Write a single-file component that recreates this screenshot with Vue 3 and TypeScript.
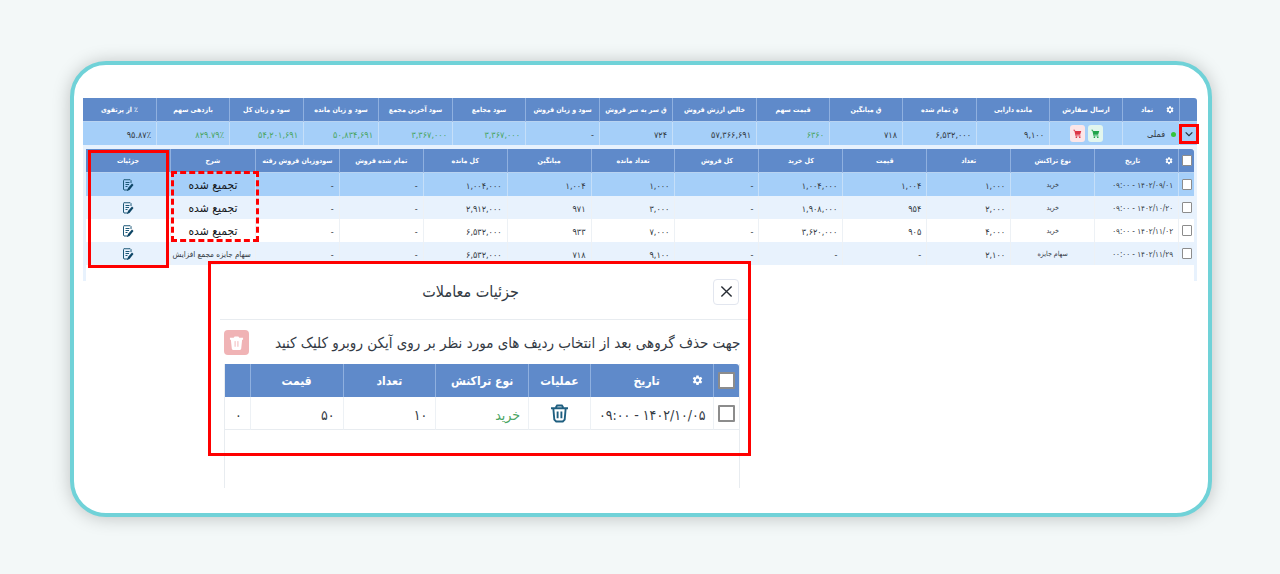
<script setup lang="ts">
interface Column {
  label: string
  width: number
  gear?: boolean
}

interface Trade {
  date: string
  kind: string
  values: string[]
  note: string
  merged: boolean
}

const share = (columns: Column[], index: number): string => {
  const total = columns.reduce((sum, column) => sum + column.width, 0)
  return `${(columns[index].width / total) * 100}%`
}

const portfolioColumns: Column[] = [
  { label: '', width: 18 },
  { label: 'نماد', width: 57, gear: true },
  { label: 'ارسال سفارش', width: 73 },
  { label: 'مانده دارایی', width: 73 },
  { label: 'ق تمام شده', width: 74 },
  { label: 'ق میانگین', width: 73 },
  { label: 'قیمت سهم', width: 73 },
  { label: 'خالص ارزش فروش', width: 84 },
  { label: 'ق سر به سر فروش', width: 73 },
  { label: 'سود و زیان فروش', width: 74 },
  { label: 'سود مجامع', width: 73 },
  { label: 'سود آخرین مجمع', width: 74 },
  { label: 'سود و زیان مانده', width: 75 },
  { label: 'سود و زیان کل', width: 74 },
  { label: 'بازدهی سهم', width: 73 },
  { label: '٪ از پرتفوی', width: 73 },
]

const portfolioValues = [
  { text: '۹,۱۰۰', gain: false },
  { text: '۶,۵۳۲,۰۰۰', gain: false },
  { text: '۷۱۸', gain: false },
  { text: '۶۳۶۰', gain: true },
  { text: '۵۷,۳۶۶,۶۹۱', gain: false },
  { text: '۷۲۴', gain: false },
  { text: '-', gain: false },
  { text: '۳,۳۶۷,۰۰۰', gain: true },
  { text: '۳,۳۶۷,۰۰۰', gain: true },
  { text: '۵۰,۸۳۴,۶۹۱', gain: true },
  { text: '۵۴,۲۰۱,۶۹۱', gain: true },
  { text: '۸۲۹.۷۹٪', gain: true },
  { text: '۹۵.۸۷٪', gain: false },
]

const tradeColumns: Column[] = [
  { label: '', width: 16 },
  { label: 'تاریخ', width: 84, gear: true },
  { label: 'نوع تراکنش', width: 84 },
  { label: 'تعداد', width: 84 },
  { label: 'قیمت', width: 84 },
  { label: 'کل خرید', width: 84 },
  { label: 'کل فروش', width: 84 },
  { label: 'تعداد مانده', width: 84 },
  { label: 'میانگین', width: 84 },
  { label: 'کل مانده', width: 84 },
  { label: 'تمام شده فروش', width: 84 },
  { label: 'سودوزیان فروش رفته', width: 84 },
  { label: 'شرح', width: 85 },
  { label: 'جزئیات', width: 84 },
]

const trades: Trade[] = [
  {
    date: '۱۴۰۲/۰۹/۰۱ - ۰۹:۰۰',
    kind: 'خرید',
    values: ['۱,۰۰۰', '۱,۰۰۴', '۱,۰۰۴,۰۰۰', '-', '۱,۰۰۰', '۱,۰۰۴', '۱,۰۰۴,۰۰۰', '-', '-'],
    note: 'تجمیع شده',
    merged: true,
  },
  {
    date: '۱۴۰۲/۱۰/۲۰ - ۰۹:۰۰',
    kind: 'خرید',
    values: ['۲,۰۰۰', '۹۵۴', '۱,۹۰۸,۰۰۰', '-', '۳,۰۰۰', '۹۷۱', '۲,۹۱۲,۰۰۰', '-', '-'],
    note: 'تجمیع شده',
    merged: true,
  },
  {
    date: '۱۴۰۲/۱۱/۰۲ - ۰۹:۰۰',
    kind: 'خرید',
    values: ['۴,۰۰۰', '۹۰۵', '۳,۶۲۰,۰۰۰', '-', '۷,۰۰۰', '۹۳۳', '۶,۵۳۲,۰۰۰', '-', '-'],
    note: 'تجمیع شده',
    merged: true,
  },
  {
    date: '۱۴۰۲/۱۱/۲۹ - ۰۰:۰۰',
    kind: 'سهام جایزه',
    values: ['۲,۱۰۰', '-', '-', '-', '۹,۱۰۰', '۷۱۸', '۶,۵۳۲,۰۰۰', '-', '-'],
    note: 'سهام جایزه مجمع افزایش',
    merged: false,
  },
]

const detailColumns: Column[] = [
  { label: '', width: 26 },
  { label: 'تاریخ', width: 124, gear: true },
  { label: 'عملیات', width: 62 },
  { label: 'نوع تراکنش', width: 93 },
  { label: 'تعداد', width: 93 },
  { label: 'قیمت', width: 93 },
  { label: '', width: 25 },
]

const gearPath =
  'M9.500 1h5l.6 3.300 1.500.9 3.200-1.200 2.500 4.300-2.600 2.200v1.800l2.600 2.200-2.500 4.300-3.200-1.200-1.500.9-.6 3.300h-5l-.6-3.300-1.500-.9-3.200 1.200-2.500-4.300 2.600-2.200v-1.800L1.700 8.300 4.200 4l3.200 1.200 1.500-.9zM12 7.600a3.800 3.800 0 1 0 0 7.600 3.800 3.800 0 0 0 0-7.600z'
const cartPath =
  'M1 2h4l1 3h16l-3 10H8.500l.5 2H20v2H7L3.500 4H1zM9 20a2 2 0 1 0 .1 0zM18 20a2 2 0 1 0 .1 0z'
</script>

<template>
  <main class="page" dir="rtl" lang="fa">
    <section class="card">
      <div class="portfolio">
        <table class="grid">
          <colgroup>
            <col v-for="(c, i) in portfolioColumns" :key="i" :style="{ width: share(portfolioColumns, i) }" />
          </colgroup>
          <thead>
            <tr>
              <th v-for="(c, i) in portfolioColumns" :key="i" scope="col">
                <span v-if="c.gear" class="with-gear">
                  <svg class="gear" viewBox="0 0 24 24" aria-hidden="true"><path :d="gearPath" fill-rule="evenodd" /></svg>
                  <span>{{ c.label }}</span>
                </span>
                <template v-else>{{ c.label }}</template>
              </th>
            </tr>
          </thead>
          <tbody>
            <tr class="active">
              <td class="control">
                <button class="expand" type="button" aria-label="نمایش جزئیات نماد" aria-expanded="true">
                  <svg viewBox="0 0 12 12" aria-hidden="true"><path d="M2 4l4 4 4-4" /></svg>
                </button>
              </td>
              <td class="symbol"><span class="dot"></span>فملی</td>
              <td class="control">
                <div class="orders">
                  <button class="order buy" type="button" aria-label="خرید">
                    <svg viewBox="0 0 24 24" aria-hidden="true"><path :d="cartPath" /></svg>
                  </button>
                  <button class="order sell" type="button" aria-label="فروش">
                    <svg viewBox="0 0 24 24" aria-hidden="true"><path :d="cartPath" /></svg>
                  </button>
                </div>
              </td>
              <td v-for="(v, i) in portfolioValues" :key="i" class="number" :class="{ gain: v.gain }">{{ v.text }}</td>
            </tr>
          </tbody>
        </table>
        <div class="mark mark-expand"></div>

        <div class="trades">
          <table class="grid">
            <colgroup>
              <col v-for="(c, i) in tradeColumns" :key="i" :style="{ width: share(tradeColumns, i) }" />
            </colgroup>
            <thead>
              <tr>
                <th v-for="(c, i) in tradeColumns" :key="i" scope="col">
                  <input v-if="i === 0" class="check" type="checkbox" aria-label="انتخاب همه" />
                  <span v-else-if="c.gear" class="with-gear">
                    <svg class="gear" viewBox="0 0 24 24" aria-hidden="true"><path :d="gearPath" fill-rule="evenodd" /></svg>
                    <span>{{ c.label }}</span>
                  </span>
                  <template v-else>{{ c.label }}</template>
                </th>
              </tr>
            </thead>
            <tbody>
              <tr v-for="(t, r) in trades" :key="r" :class="{ active: r === 0, tinted: r % 2 === 1 }">
                <td class="control"><input class="check" type="checkbox" :aria-label="t.date" /></td>
                <td class="number date">{{ t.date }}</td>
                <td class="kind">{{ t.kind }}</td>
                <td v-for="(v, i) in t.values" :key="i" class="number">{{ v }}</td>
                <td :class="t.merged ? 'merged' : 'note'">{{ t.note }}</td>
                <td class="control">
                  <button class="edit" type="button" aria-label="جزئیات">
                    <svg viewBox="0 0 24 28" aria-hidden="true">
                      <path class="sheet" d="M18 10V5l-2-2-2 1-2-1-2 1-2-1-2 1-2-1-1 2v17l1 2h8" />
                      <path class="sheet" d="M7 9h8M7 13h7M7 17h4" />
                      <path class="pen" d="M20 11l3 3-8 10-5 2 2-6z" />
                    </svg>
                  </button>
                </td>
              </tr>
            </tbody>
          </table>
          <div class="mark mark-details"></div>
          <div class="mark mark-merged"></div>
        </div>
      </div>

      <section class="dialog-area" role="dialog" aria-labelledby="dialog-title">
        <div class="dialog">
          <header class="dialog-head">
            <button class="close" type="button" aria-label="بستن">
              <svg viewBox="0 0 14 14" aria-hidden="true"><path d="M1.500 1.500l11 11M12.500 1.500l-11 11" /></svg>
            </button>
            <h2 id="dialog-title">جزئیات معاملات</h2>
          </header>
          <div class="dialog-body">
            <div class="hint">
              <p>جهت حذف گروهی بعد از انتخاب ردیف های مورد نظر بر روی آیکن روبرو کلیک کنید</p>
              <button class="remove-all" type="button" aria-label="حذف گروهی">
                <svg viewBox="0 0 16 16" aria-hidden="true">
                  <path d="M5 2.500L6 1h4l1 1.500h4v2h-1L13 14l-1 1.500H4L3 14 2 4.500H1v-2z" />
                  <path class="slots" d="M6.500 6v6M9.500 6v6" />
                </svg>
              </button>
            </div>
            <div class="detail-frame">
              <table class="grid large">
                <colgroup>
                  <col v-for="(c, i) in detailColumns" :key="i" :style="{ width: share(detailColumns, i) }" />
                </colgroup>
                <thead>
                  <tr>
                    <th v-for="(c, i) in detailColumns" :key="i" scope="col">
                      <input v-if="i === 0" class="check" type="checkbox" aria-label="انتخاب همه" />
                      <span v-else-if="c.gear" class="with-gear">
                        <svg class="gear" viewBox="0 0 24 24" aria-hidden="true"><path :d="gearPath" fill-rule="evenodd" /></svg>
                        <span>{{ c.label }}</span>
                      </span>
                      <template v-else>{{ c.label }}</template>
                    </th>
                  </tr>
                </thead>
                <tbody>
                  <tr>
                    <td class="control"><input class="check" type="checkbox" aria-label="انتخاب ردیف" /></td>
                    <td class="number">۱۴۰۲/۱۰/۰۵ - ۰۹:۰۰</td>
                    <td class="control">
                      <button class="remove" type="button" aria-label="حذف">
                        <svg viewBox="0 0 18 20" aria-hidden="true">
                          <path d="M0 4.500h18M5.500 4.500V3l1-1.500h5l1 1.500v1.500M2.500 5l1 11.500 2 2h7l2-2 1-11.500M7 8v7M11 8v7" />
                        </svg>
                      </button>
                    </td>
                    <td class="number gain">خرید</td>
                    <td class="number">۱۰</td>
                    <td class="number">۵۰</td>
                    <td class="number">۰</td>
                  </tr>
                </tbody>
              </table>
            </div>
          </div>
        </div>
        <div class="mark mark-dialog"></div>
      </section>
    </section>
  </main>
</template>

<style>
body {
  background: #f3f8f8;
}
</style>

<style scoped>
* {
  box-sizing: border-box;
}

.page {
  padding: 61px 68px 56px 70px;
  font-family: "DejaVu Sans Condensed", "DejaVu Sans", sans-serif;
  font-size: 8px;
  color: #333a44;
}

.card {
  padding: 33px 11px 25px 9px;
  background: #fff;
  border: 4px solid #70d2d8;
  border-radius: 36px;
  box-shadow: 0 1px 18px rgba(0, 0, 0, 0.22);
}

.grid {
  width: 100%;
  table-layout: fixed;
  border-collapse: separate;
  border-spacing: 0;
}

th,
td {
  height: 23px;
  padding: 0 5px;
  overflow: hidden;
  white-space: nowrap;
  line-height: 12px;
  text-align: center;
  border-left: 1px solid #edf1f5;
}

th {
  height: 24px;
  padding: 0;
  color: #fff;
  font-size: 7px;
  font-weight: bold;
  background: #5f8aca;
  border-left-color: #8fb0df;
  border-bottom: 1px solid #b8d3f1;
}

th:last-child,
td:last-child {
  border-left: 0;
}

th:first-child {
  border-top-right-radius: 3px;
}

.active td {
  background: #a5cff9;
  border-left-color: #c5dff9;
}

.tinted td {
  background: #e8f2fd;
}

.number {
  padding-top: 3px;
  font-size: 9px;
  text-align: right;
}

.date {
  font-size: 8px;
}

.gain {
  color: #4aa564;
}

.control {
  padding: 0;
}

.with-gear {
  display: grid;
  grid-template-columns: 8px 1fr;
  align-items: center;
  padding: 0 5px;
}

.gear {
  display: block;
  width: 8px;
  height: 8px;
  fill: #fff;
}

.symbol {
  padding: 0 3px;
  font-size: 9px;
  text-align: right;
}

.dot {
  display: inline-block;
  width: 5px;
  height: 5px;
  margin-left: 6px;
  background: #35c43b;
  border-radius: 50%;
}

button {
  display: flex;
  align-items: center;
  justify-content: center;
  padding: 0;
  background: none;
  border: 0;
}

.expand {
  width: 100%;
  height: 19px;
}

.expand svg {
  width: 10px;
  height: 10px;
  fill: none;
  stroke: #26323f;
  stroke-width: 1.500;
}

.orders {
  display: flex;
  justify-content: center;
  gap: 3px;
}

.order {
  width: 15px;
  height: 17px;
  border-radius: 3px;
}

.order svg {
  width: 9px;
  height: 9px;
}

.buy {
  background: #e2f6ee;
}

.buy svg {
  fill: #1fa44c;
}

.sell {
  background: #fce6e8;
}

.sell svg {
  fill: #dc3545;
}

.portfolio {
  position: relative;
}

.trades {
  position: relative;
  padding: 4px 3px 16px;
  background: linear-gradient(#e8f2fd, #e8f2fd) right / 3px 100% no-repeat,
    linear-gradient(#e8f2fd, #e8f2fd) left / 3px 100% no-repeat,
    linear-gradient(#e8f2fd, #e8f2fd) top / 100% 4px no-repeat;
}

.check {
  display: block;
  width: 10px;
  height: 11px;
  margin: 0 auto;
  appearance: none;
  background: #fff;
  border: 1px solid #8c8c8c;
  border-radius: 1px;
}

.kind {
  font-size: 7px;
}

.note {
  padding: 3px 4px 0 0;
  text-align: right;
}

.merged {
  padding: 0;
  color: #16191d;
  font-size: 12px;
}

.edit {
  margin: 0 auto;
}

.edit svg {
  width: 12px;
  height: 14px;
}

.sheet {
  fill: none;
  stroke: #1c5878;
  stroke-width: 2;
}

.pen {
  fill: #0d4565;
}

.mark {
  position: absolute;
  border: 3px solid #fe0000;
  pointer-events: none;
}

.mark-expand {
  top: 26px;
  right: -2px;
  width: 20px;
  height: 20px;
}

.mark-details {
  top: 5px;
  bottom: 13px;
  left: 5px;
  width: 7.3%;
}

.mark-merged {
  top: 26px;
  left: 7.9%;
  width: 7.9%;
  height: 71px;
  border-style: dashed;
}

.dialog-area {
  position: relative;
  width: 48.8%;
  margin: -20px 40% 0 0;
  padding: 3px 2px 0 12px;
}

.mark-dialog {
  inset: 0 0 32px;
}

.dialog {
  background: #fff;
}

.dialog-head {
  display: grid;
  grid-template-columns: 54px 1fr 26px;
  align-items: center;
  height: 56px;
  padding: 0 10px;
  border-bottom: 1px solid #e8ecf0;
}

.dialog-head h2 {
  margin: 0;
  font-size: 16px;
  font-weight: normal;
  line-height: 24px;
  text-align: center;
}

.close {
  width: 26px;
  height: 26px;
  border: 1px solid #e2e6ef;
  border-radius: 4px;
}

.close svg {
  width: 13px;
  height: 13px;
  fill: none;
  stroke: #262b33;
  stroke-width: 1.500;
}

.dialog-body {
  padding: 10px 9px 0 4px;
}

.hint {
  display: flex;
  align-items: center;
  justify-content: space-between;
  height: 25px;
  margin-bottom: 9px;
}

.hint p {
  margin: 0;
  font-size: 15px;
  line-height: 24px;
  white-space: nowrap;
}

.remove-all {
  width: 25px;
  height: 25px;
  background: #f0b3b5;
  border-radius: 4px;
}

.remove-all svg {
  width: 15px;
  height: 16px;
  fill: #fff;
}

.remove-all .slots {
  stroke: #f0b3b5;
}

.detail-frame {
  height: 124px;
  border: 1px solid #e8ecf0;
  border-width: 0 1px;
}

.large th,
.large td {
  height: 33px;
  line-height: 18px;
}

.large th {
  font-size: 12px;
  border-bottom: 0;
}

.large td {
  border-bottom: 1px solid #e8ecf0;
}

.large .number {
  padding: 3px 8px 0;
  font-size: 14px;
}

.large .with-gear {
  grid-template-columns: 11px 1fr;
  padding: 0 10px;
}

.large .gear {
  width: 11px;
  height: 11px;
}

.large .check {
  width: 17px;
  height: 17px;
  border-width: 2px;
}

.remove {
  margin: 0 auto;
}

.remove svg {
  width: 17px;
  height: 19px;
  fill: none;
  stroke: #1f5f80;
  stroke-width: 2;
}
</style>
